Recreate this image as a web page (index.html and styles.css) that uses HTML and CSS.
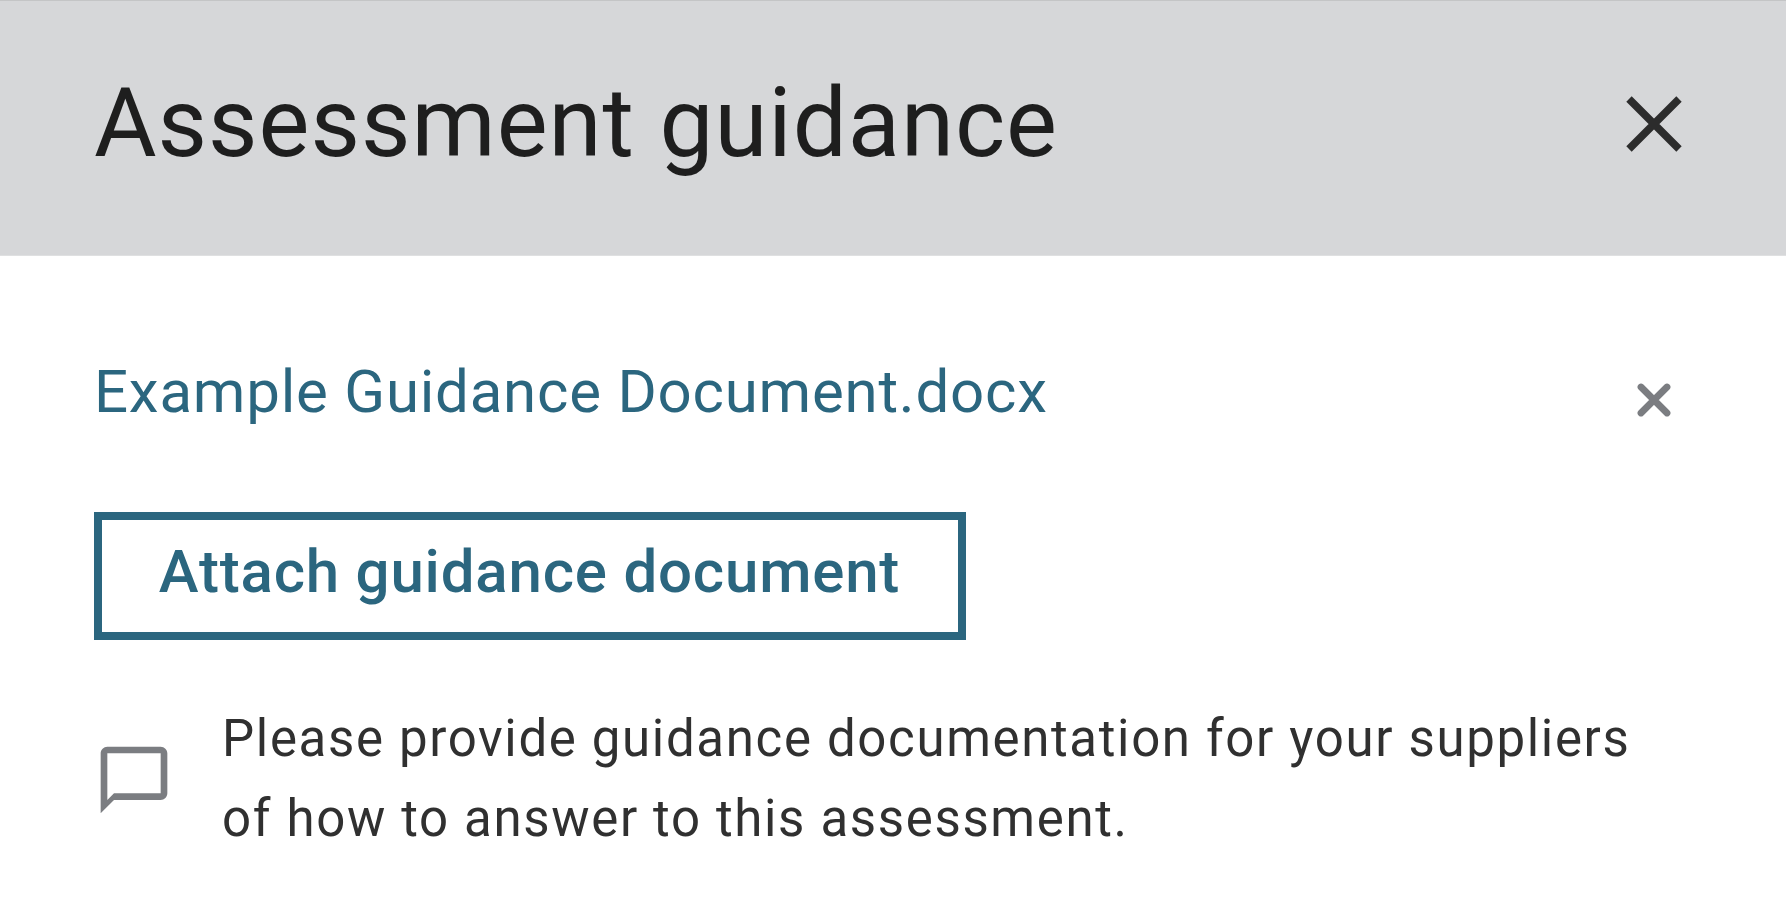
FILE: index.html
```html
<!DOCTYPE html>
<html lang="en">
<head>
    <meta charset="UTF-8">
    <meta name="viewport" content="width=device-width, initial-scale=1.0">
    <title>Assessment guidance</title>
    <link rel="stylesheet" href="styles.css">
</head>
<body>
    <div class="dialog">
        <header class="dialog-header">
            <h1 class="dialog-title">Assessment guidance</h1>
            <button class="icon-button" aria-label="Close">
                <svg class="close-icon" viewBox="0 0 56 56"><path d="M3 3L53 53M53 3L3 53"/></svg>
            </button>
        </header>
        <main class="dialog-body">
            <div class="file-row">
                <a class="file-link" href="#">Example Guidance Document.docx</a>
                <button class="icon-button remove-button" aria-label="Remove document">
                    <svg class="remove-icon" viewBox="0 0 34 34"><path d="M4 4L30 30M30 4L4 30"/></svg>
                </button>
            </div>
            <button class="attach-button">Attach guidance document</button>
            <div class="hint">
                <svg class="comment-icon" viewBox="0 0 24 24"><path d="M20 2H4c-1.100 0-2 .9-2 2v18l4-4h14c1.100 0 2-.9 2-2V4c0-1.100-.9-2-2-2zm0 14H6l-2 2V4h16v12z"/></svg>
                <p class="hint-text">Please provide guidance documentation for your suppliers<br>of how to answer to this assessment.</p>
            </div>
        </main>
    </div>
</body>
</html>
```
FILE: styles.css
```css
body {
    margin: 0;
    background: #fff;
    font-family: Roboto, sans-serif;
}
.dialog-header {
    display: flex;
    align-items: center;
    justify-content: space-between;
    box-sizing: border-box;
    height: 256px;
    padding: 0 104px 9px 94px;
    border-top: 1px solid #c4c5c6;
    border-bottom: 1px solid #dfe0e1;
    background: #d6d7d9;
}
.dialog-title {
    margin: 0;
    padding-bottom: 1px;
    font-size: 96px;
    font-weight: 400;
    letter-spacing: 0.96px;
    color: #1e1e1e;
}
.icon-button {
    display: flex;
    padding: 0;
    border: 0;
    background: none;
    cursor: pointer;
}
.close-icon {
    width: 56px;
    height: 56px;
    fill: none;
    stroke: #2c2c2c;
    stroke-width: 7.6;
}
.remove-button {
    padding-top: 17px;
}
.remove-icon {
    width: 34px;
    height: 34px;
    fill: none;
    stroke: #7b7d81;
    stroke-width: 6.8;
    stroke-linecap: round;
}
.dialog-body {
    padding: 99px 115px 0 94px;
}
.file-row {
    display: flex;
    align-items: center;
    justify-content: space-between;
    height: 72px;
}
.file-link {
    font-size: 60px;
    letter-spacing: 0.77px;
    color: #2b667f;
    text-decoration: none;
}
.attach-button {
    display: block;
    width: 872px;
    height: 128px;
    margin-top: 85px;
    padding: 0 1px 10px 0;
    border: 8px solid #2b667f;
    background: #fff;
    font-family: inherit;
    font-size: 60px;
    font-weight: 500;
    letter-spacing: 0.8px;
    color: #2b667f;
    cursor: pointer;
}
.hint {
    display: flex;
    align-items: center;
    margin-top: 59px;
}
.comment-icon {
    width: 80px;
    height: 80px;
    padding-top: 1px;
    fill: #7b7d81;
}
.hint-text {
    margin: 0 0 0 48px;
    font-size: 51px;
    line-height: 80px;
    letter-spacing: 1.65px;
    white-space: nowrap;
    color: #303030;
}
```
